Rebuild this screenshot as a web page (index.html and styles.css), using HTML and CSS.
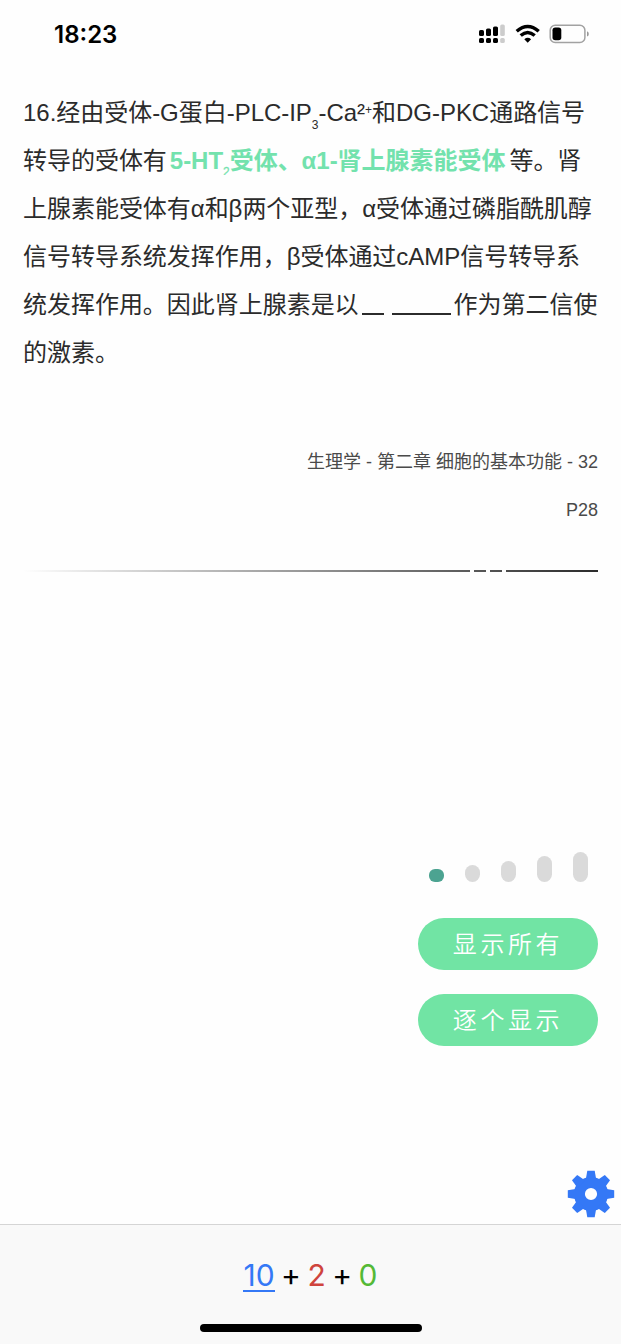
FILE: index.html
```html
<!DOCTYPE html>
<html lang="zh-CN">
<head>
<meta charset="utf-8">
<title>生理学</title>
<link rel="stylesheet" href="styles.css">
</head>
<body>
<div class="screen">
  <header class="status">
    <div class="time">18:23</div>
    <svg class="status-icons" width="112" height="24" viewBox="0 0 112 24">
      <g fill="#000">
        <rect x="1" y="8" width="5" height="6" rx="1.6"/><rect x="8" y="6.5" width="5" height="7.5" rx="1.6"/><rect x="15" y="4.5" width="5" height="9.5" rx="1.6"/>
        <rect x="1" y="16" width="5" height="5" rx="1.6"/><rect x="8" y="16" width="5" height="5" rx="1.6"/><rect x="15" y="16" width="5" height="5" rx="1.6"/>
      </g>
      <g fill="#ccc"><rect x="22.2" y="2.5" width="4.6" height="11.5" rx="1.6"/><rect x="22.2" y="16" width="4.6" height="5" rx="1.6"/></g>
      <g fill="none" stroke="#000" stroke-width="3.4">
        <path d="M38.700 9.300Q49.700 -.4 60.700 9.300"/>
        <path d="M42.700 13.600Q49.700 7.400 56.700 13.600"/>
      </g>
      <path d="M49.700 20.800L46.300 17.200Q49.700 14.300 53.100 17.200Z" fill="#000"/>
      <rect x="72.200" y="3.200" width="34.700" height="17.300" rx="5" fill="none" stroke="#a2a2a2" stroke-width="1.500"/>
      <rect x="74.500" y="5.500" width="8.800" height="12.800" rx="2.800" fill="#000"/>
      <path d="M109 9.200q1.800.7 1.800 2.700t-1.800 2.700z" fill="#999"/>
    </svg>
  </header>
  <main class="content">
    <div class="question">
      <div class="line">16.经由受体-G蛋白-PLC-IP<sub class="sub">3</sub>-Ca²<span class="plus">+</span>和DG-PKC通路信号</div>
      <div class="line">转导的受体有<span class="answer">5-HT<sub class="sub sub-clip">2</sub>受体、α1-肾上腺素能受体</span>等。肾</div>
      <div class="line">上腺素能受体有α和β两个亚型，α受体通过磷脂酰肌醇</div>
      <div class="line">信号转导系统发挥作用，β受体通过cAMP信号转导系</div>
      <div class="line">统发挥作用。因此肾上腺素是以<span class="blank blank-short"></span><span class="blank blank-long"></span>作为第二信使</div>
      <div class="line">的激素。</div>
    </div>
    <div class="source">
      <div>生理学 - 第二章 细胞的基本功能 - 32</div>
      <div>P28</div>
    </div>
    <div class="rule"><i class="gap"></i><i class="gap"></i><i class="gap"></i></div>
    <section class="controls">
      <div class="levels"><i class="level level-1"></i><i class="level level-2"></i><i class="level level-3"></i><i class="level level-4"></i><i class="level level-5"></i></div>
      <button class="action">显示所有</button>
      <button class="action">逐个显示</button>
    </section>
    <svg class="gear" width="48" height="48" viewBox="-24 -24 48 48">
      <defs><path id="tooth" d="M-5.300 -14L-3.700 -23.200H3.700L5.300 -14Z"/></defs>
      <g fill="#3478f6">
        <circle r="11.600" fill="none" stroke="#3478f6" stroke-width="11"/>
        <use href="#tooth"/><use href="#tooth" transform="rotate(45)"/><use href="#tooth" transform="rotate(90)"/><use href="#tooth" transform="rotate(135)"/><use href="#tooth" transform="rotate(180)"/><use href="#tooth" transform="rotate(225)"/><use href="#tooth" transform="rotate(270)"/><use href="#tooth" transform="rotate(315)"/>
      </g>
    </svg>
  </main>
  <footer class="footer">
    <div class="counts"><span class="new">10</span><span>+</span><span class="learning">2</span><span>+</span><span class="due">0</span></div>
    <div class="home"></div>
  </footer>
</div>
</body>
</html>
```
FILE: styles.css
```css
* { box-sizing: border-box; }
body { margin: 0; background: #fefefe; color: #2b2b2b; font-family: "Liberation Sans", "Noto Sans CJK SC", sans-serif; }
.screen { width: 621px; height: 1344px; display: flex; flex-direction: column; overflow: hidden; }
.status { height: 88px; padding: 22px 31px 0 54px; display: flex; justify-content: space-between; align-items: flex-start; color: #000; }
.time { padding-top: 1px; font: 600 24px/24px Inter, sans-serif; }
.content { flex: 1; display: flex; flex-direction: column; padding: 0 23px; }
.question { height: 289px; padding-top: 1px; font-size: 24px; line-height: 48px; letter-spacing: -.03px; }
.line { height: 48px; white-space: nowrap; }
.sub { display: inline-block; font-size: 12px; line-height: 12px; vertical-align: -8px; font-weight: 400; }
.sub-clip { vertical-align: -7px; -webkit-text-stroke: .3px currentColor; clip-path: inset(0 0 3px); }
.plus { display: inline-block; width: 7px; font-size: 12px; line-height: 12px; vertical-align: 7px; }
.answer { margin: 0 4px 0 3px; color: #73e2ad; font-weight: 700; }
.blank { display: inline-block; height: 2px; background: #2b2b2b; vertical-align: -2px; }
.blank-short { width: 22px; margin: 0 8px 0 3px; }
.blank-long { width: 59px; margin-right: 3px; }
.source { margin-top: 61px; text-align: right; font-size: 18px; line-height: 48px; color: #4a4a4a; }
.rule { height: 2px; margin-top: 36px; padding-right: 92px; display: flex; justify-content: flex-end; gap: 12px; background: linear-gradient(90deg, #fefefe, #2b2b2b); }
.gap { width: 4px; background: #fefefe; }
.controls { margin-top: 279px; display: flex; flex-direction: column; align-items: flex-end; }
.levels { width: 180px; height: 31px; padding: 0 10.500px; margin-bottom: 36px; display: flex; justify-content: space-between; align-items: flex-end; }
.level { width: 15px; border-radius: 7.500px; background: #dadada; }
.level-1 { height: 13px; border-radius: 6px; background: #4ca391; }
.level-2 { height: 17px; }
.level-3 { height: 21px; }
.level-4 { height: 26px; }
.level-5 { height: 30px; }
.action { width: 180px; height: 52px; margin: 0 0 24px; padding: 0 0 2px; border: 0; border-radius: 26px; background: #71e4a4; color: #fff; font: 350 24px/50px "Noto Sans CJK SC", sans-serif; letter-spacing: 3.600px; }
.gear { align-self: flex-end; margin: 100px -17px 0 0; }
.footer { height: 120px; padding-top: 34px; border-top: 1px solid #d5d5d5; background: #f9f9f9; display: flex; flex-direction: column; align-items: center; }
.counts { display: flex; gap: 6.500px; font: 400 30px/32px Inter, sans-serif; color: #000; }
.new { height: 33px; border-bottom: 2px solid #3478f6; color: #3478f6; }
.learning { color: #cf443d; }
.due { color: #54b936; }
.home { width: 222px; height: 8px; margin-top: 32px; border-radius: 4px; background: #000; }
```
